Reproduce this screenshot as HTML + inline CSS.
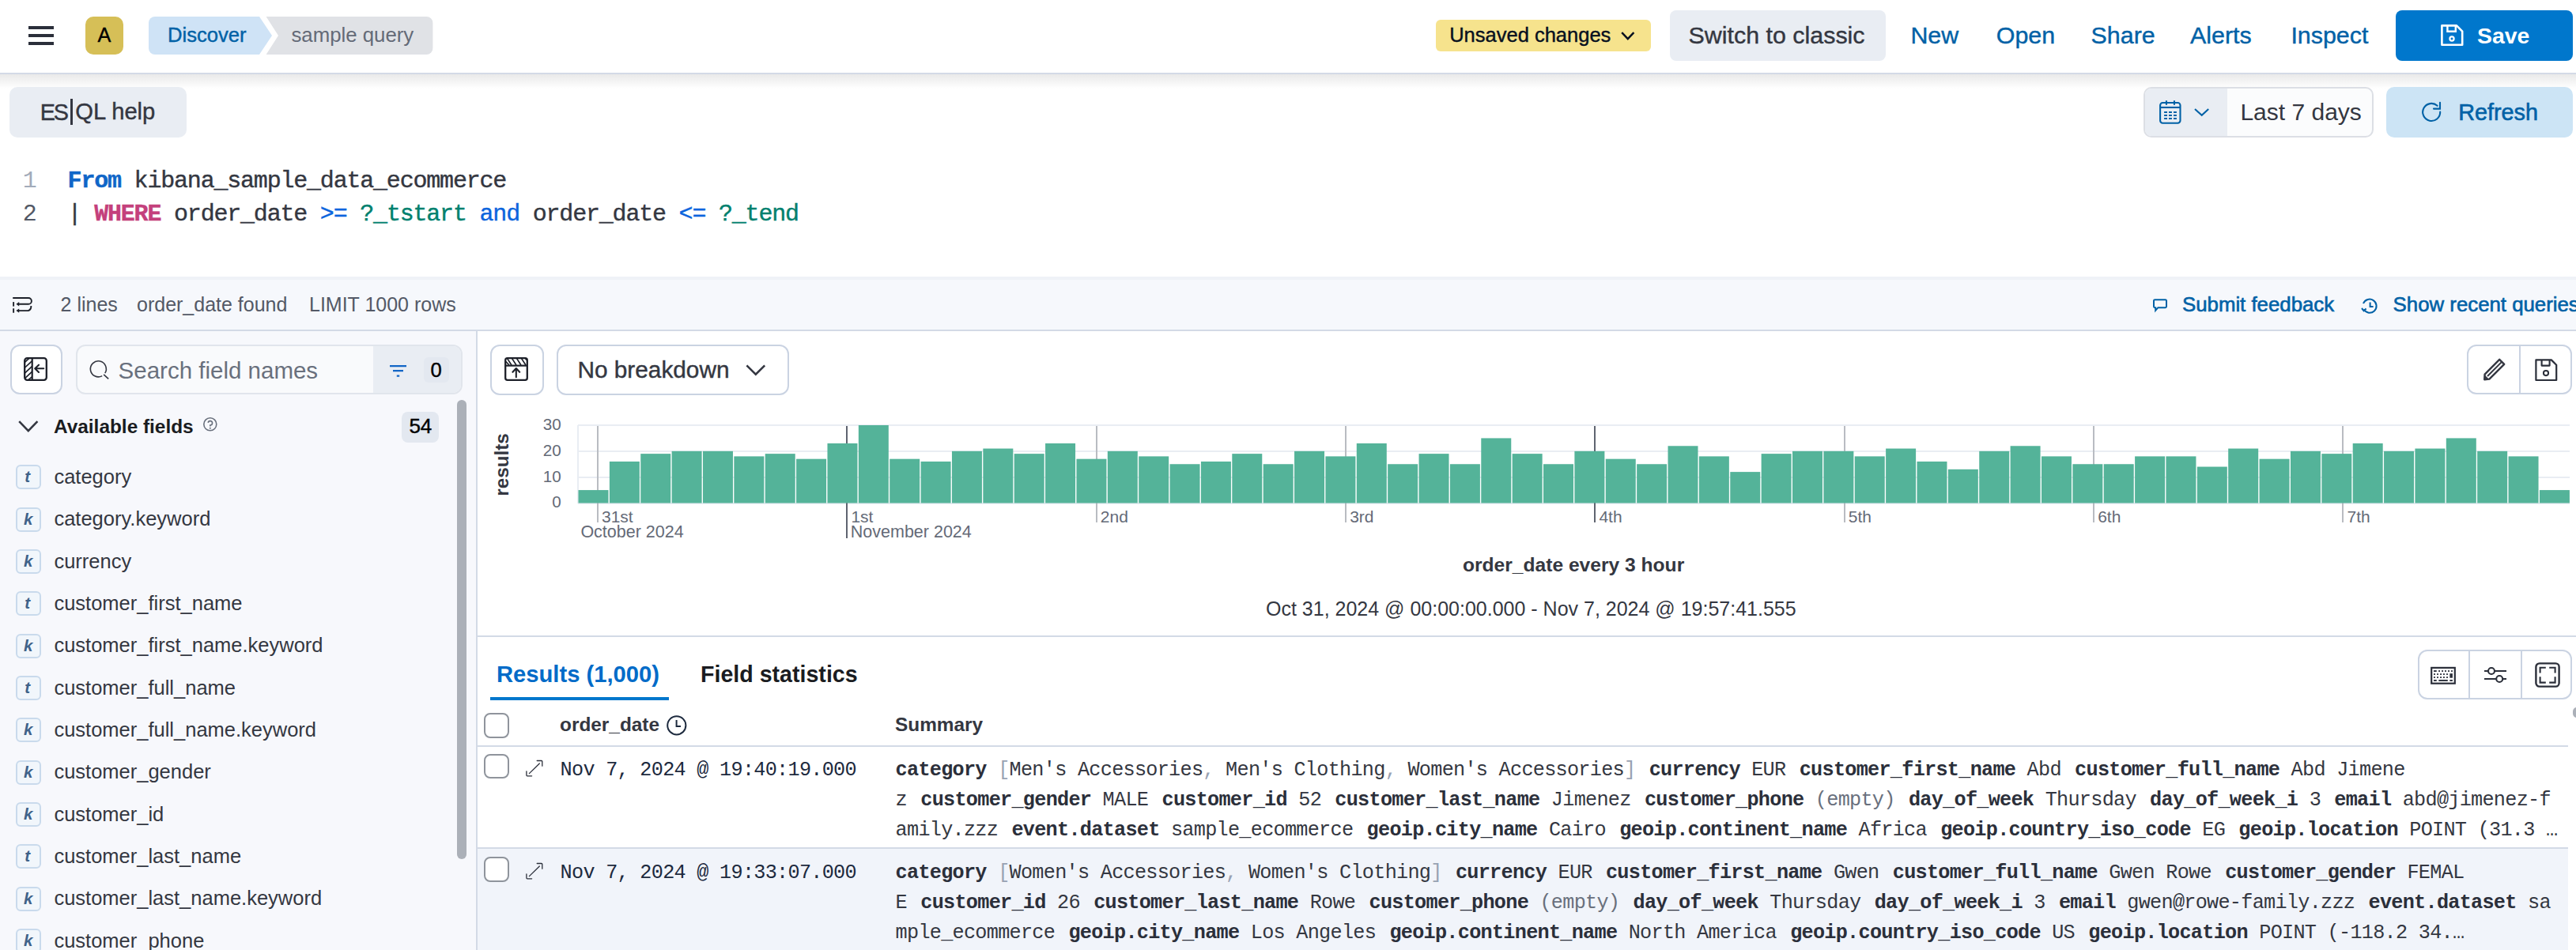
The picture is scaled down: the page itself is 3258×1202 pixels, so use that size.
<!DOCTYPE html>
<html><head><meta charset="utf-8"><title>Discover</title>
<style>
html,body{margin:0;padding:0;background:#fff;}
html{overflow:hidden;}
body{zoom:1;width:1629px;height:601px;overflow:hidden;position:relative;font-family:"Liberation Sans",sans-serif;}
@media (min-width:2400px){body{zoom:2;}}
.a{position:absolute;}
.t{white-space:pre;}
.s{font-family:"Liberation Sans",sans-serif;}
.m{font-family:"Liberation Mono",monospace;}
svg{overflow:visible;}
b{font-weight:700;}
.k{color:#2b2f3a;margin-left:1.45px;}
.md{-webkit-text-stroke:0.2px currentColor;}
</style></head><body>
<div class="a" style="left:0.00px;top:0.00px;width:1629.00px;height:46.00px;background:#fff;"></div>
<div class="a" style="left:0.00px;top:46.00px;width:1629.00px;height:1.00px;background:#d3dae6;"></div>
<div class="a" style="left:0.00px;top:47.00px;width:1629.00px;height:9.00px;background:linear-gradient(#e9e9e9,rgba(255,255,255,0));"></div>
<div class="a" style="left:18.00px;top:16.55px;width:16.00px;height:1.75px;background:#2b2f3a;"></div>
<div class="a" style="left:18.00px;top:21.60px;width:16.00px;height:1.75px;background:#2b2f3a;"></div>
<div class="a" style="left:18.00px;top:26.70px;width:16.00px;height:1.75px;background:#2b2f3a;"></div>
<div class="a" style="left:54.00px;top:10.45px;width:24.00px;height:23.90px;background:#d6bf57;border-radius:5px;"></div>
<div class="a t s md" style="left:61.80px;top:16.03px;font-size:12.6px;line-height:12.6px;color:#000;">A</div>
<svg class="a" style="left:94.00px;top:10.45px;" width="180" height="24" viewBox="0 0 180 24"><path d="M4 0 H70 L78 12 L70 24 H4 A4 4 0 0 1 0 20 V4 A4 4 0 0 1 4 0Z" fill="#cfe3f6"/><path d="M74.3 0 H175.7 A4 4 0 0 1 179.7 4 V20 A4 4 0 0 1 175.7 24 H74.3 L82 12 Z" fill="#e0e2e6"/></svg>
<div class="a t s md" style="left:106.00px;top:15.86px;font-size:12.8px;line-height:12.8px;color:#0061a6;">Discover</div>
<div class="a t s" style="left:184.20px;top:15.78px;font-size:12.9px;line-height:12.9px;color:#646a77;">sample query</div>
<div class="a" style="left:907.90px;top:12.60px;width:136.10px;height:20.00px;background:#f6e38d;border-radius:3px;"></div>
<div class="a t s md" style="left:916.60px;top:15.76px;font-size:12.75px;line-height:12.75px;color:#07101f;">Unsaved changes</div>
<svg class="a" style="left:1024.90px;top:19.90px;" width="9" height="6" viewBox="0 0 9 6"><path d="M0.6 0.6 L4.4 4.6 L8.2 0.6" fill="none" stroke="#07101f" stroke-width="1.2"/></svg>
<div class="a" style="left:1056.00px;top:6.40px;width:136.60px;height:32.00px;background:#e9edf3;border-radius:4px;"></div>
<div class="a t s md" style="left:1067.80px;top:14.49px;font-size:15.2px;line-height:15.2px;color:#343741;">Switch to classic</div>
<div class="a t s md" style="left:1208.20px;top:14.73px;font-size:15.2px;line-height:15.2px;color:#0061a6;">New</div>
<div class="a t s md" style="left:1262.40px;top:14.73px;font-size:15.2px;line-height:15.2px;color:#0061a6;">Open</div>
<div class="a t s md" style="left:1322.30px;top:14.73px;font-size:15.2px;line-height:15.2px;color:#0061a6;">Share</div>
<div class="a t s md" style="left:1385.00px;top:14.73px;font-size:15.2px;line-height:15.2px;color:#0061a6;">Alerts</div>
<div class="a t s md" style="left:1448.70px;top:14.73px;font-size:15.2px;line-height:15.2px;color:#0061a6;">Inspect</div>
<div class="a" style="left:1515.00px;top:6.50px;width:112.10px;height:31.80px;background:#0077cc;border-radius:4px;"></div>
<svg class="a" style="left:1543.30px;top:15.70px;" width="14.3" height="13.6" viewBox="0 0 14.3 13.6"><path d="M0.7 0.7 H10 L13.6 4.3 V12.9 H0.7 Z" fill="none" stroke="#fff" stroke-width="1.3" stroke-linejoin="round"/><path d="M4.2 0.7 V4.4 H9.4 V0.7" fill="none" stroke="#fff" stroke-width="1.2"/><circle cx="7" cy="9" r="1.3" fill="none" stroke="#fff" stroke-width="1.1"/></svg>
<div class="a t s" style="left:1566.50px;top:15.58px;font-size:14.2px;line-height:14.2px;color:#fff;font-weight:700;">Save</div>
<div class="a" style="left:6.00px;top:55.00px;width:112.00px;height:32.00px;background:#e9edf3;border-radius:5px;"></div>
<div class="a t s md" style="left:25.40px;top:63.91px;font-size:14.4px;line-height:14.4px;color:#343741;letter-spacing:-1.1px;">ES</div>
<div class="a" style="left:44.40px;top:62.30px;width:1.50px;height:16.90px;background:#343741;"></div>
<div class="a t s md" style="left:47.60px;top:63.74px;font-size:14.6px;line-height:14.6px;color:#343741;">QL help</div>
<div class="a" style="left:1355.60px;top:55.10px;width:145.20px;height:31.70px;background:#fbfcfd;border:1px solid #dcdfe5;border-radius:5px;box-sizing:border-box;"></div>
<div class="a" style="left:1356.60px;top:56.10px;width:51.70px;height:29.70px;background:#e9edf3;border-radius:4px 0 0 4px;"></div>
<svg class="a" style="left:1365.50px;top:63.50px;" width="14" height="15" viewBox="0 0 14 15"><rect x="0.55" y="1.5" width="12.7" height="12.9" rx="1.6" fill="none" stroke="#0061a6" stroke-width="1.05"/><path d="M0.6 4.47 H13.3" stroke="#0061a6" stroke-width="1.05"/><path d="M4.47 0.1 V2.9 M9.47 0.1 V2.9" stroke="#0061a6" stroke-width="1.05"/><rect x="3.05" y="7.0" width="1.95" height="1.0" fill="#0061a6"/><rect x="3.05" y="9.0" width="1.95" height="1.0" fill="#0061a6"/><rect x="3.05" y="11.0" width="1.95" height="1.0" fill="#0061a6"/><rect x="6.0" y="7.0" width="1.95" height="1.0" fill="#0061a6"/><rect x="6.0" y="9.0" width="1.95" height="1.0" fill="#0061a6"/><rect x="6.0" y="11.0" width="1.95" height="1.0" fill="#0061a6"/><rect x="9.0" y="7.0" width="1.95" height="1.0" fill="#0061a6"/><rect x="9.0" y="9.0" width="1.95" height="1.0" fill="#0061a6"/><rect x="9.0" y="11.0" width="1.95" height="1.0" fill="#0061a6"/></svg>
<svg class="a" style="left:1387.70px;top:68.40px;" width="10" height="6" viewBox="0 0 10 6"><path d="M0.5 0.5 L4.85 4.4 L9.1 0.5" fill="none" stroke="#0061a6" stroke-width="1.05"/></svg>
<div class="a t s" style="left:1416.70px;top:63.30px;font-size:15px;line-height:15px;color:#343741;">Last 7 days</div>
<div class="a" style="left:1509.00px;top:55.00px;width:117.80px;height:31.80px;background:#cce4f5;border-radius:5px;"></div>
<svg class="a" style="left:1532.00px;top:64.70px;" width="12" height="12.5" viewBox="0 0 12 12.5"><path d="M9.3 2.4 A5.5 5.5 0 1 0 11.1 6.3" fill="none" stroke="#0061a6" stroke-width="1.05" stroke-linecap="round"/><path d="M11.0 0.4 V4.3 H7.0" fill="none" stroke="#0061a6" stroke-width="1.05" stroke-linecap="round"/></svg>
<div class="a t s" style="left:1554.60px;top:63.81px;font-size:14.4px;line-height:14.4px;color:#0061a6;-webkit-text-stroke:0.3px currentColor;">Refresh</div>
<div class="a t m" style="left:14.40px;top:106.91px;font-size:15px;line-height:15px;color:#a2abba;letter-spacing:-0.6px;">1</div>
<div class="a t m" style="left:14.40px;top:127.91px;font-size:15px;line-height:15px;color:#535966;letter-spacing:-0.6px;">2</div>
<div class="a t m md" style="left:42.80px;top:106.91px;font-size:15px;line-height:15px;color:#343741;letter-spacing:-0.6px;"><span style="color:#0f66c8;font-weight:700">From</span> kibana_sample_data_ecommerce</div>
<div class="a t m md" style="left:42.80px;top:127.91px;font-size:15px;line-height:15px;color:#343741;letter-spacing:-0.6px;">| <span style="color:#c4407c;font-weight:700">WHERE</span> order_date <span style="color:#0b64dd">&gt;=</span> <span style="color:#00806e">?_tstart</span> <span style="color:#0b64dd">and</span> order_date <span style="color:#0b64dd">&lt;=</span> <span style="color:#00806e">?_tend</span></div>
<div class="a" style="left:0.00px;top:175.00px;width:1629.00px;height:33.50px;background:#f6f8fc;"></div>
<div class="a" style="left:0.00px;top:175.00px;width:1629.00px;height:2.00px;background:#eff2f7;"></div>
<div class="a" style="left:0.00px;top:208.30px;width:1629.00px;height:1.50px;background:#d3dae6;"></div>
<svg class="a" style="left:7.90px;top:188.00px;" width="12.5" height="10.5" viewBox="0 0 12.5 10.5"><path d="M0.1 0.5 H10 A1.95 1.95 0 0 1 10 4.4 H3.7 M11.65 5.5 A2.9 2.9 0 0 1 9.9 8.55 H3.7" fill="none" stroke="#1d2029" stroke-width="0.95"/><path d="M2.2 4.4 L4.1 3.05 V5.75Z M2.2 8.55 L4.1 7.2 V9.9Z" fill="#1d2029"/><rect x="0.08" y="3.05" width="0.95" height="2.75" fill="#1d2029"/><rect x="0.08" y="7.12" width="0.95" height="2.75" fill="#1d2029"/></svg>
<div class="a t s" style="left:38.30px;top:186.32px;font-size:12.5px;line-height:12.5px;color:#535966;">2 lines</div>
<div class="a t s" style="left:86.50px;top:186.32px;font-size:12.5px;line-height:12.5px;color:#535966;">order_date found</div>
<div class="a t s" style="left:195.50px;top:186.32px;font-size:12.5px;line-height:12.5px;color:#535966;">LIMIT 1000 rows</div>
<svg class="a" style="left:1361.50px;top:188.90px;" width="9" height="8" viewBox="0 0 9 8"><path d="M1.2 0.6 H7.8 A0.7 0.7 0 0 1 8.5 1.3 V4.9 A0.7 0.7 0 0 1 7.8 5.6 H3.2 L1.6 7.4 V5.6 H1.2 A0.7 0.7 0 0 1 0.5 4.9 V1.3 A0.7 0.7 0 0 1 1.2 0.6Z" fill="none" stroke="#0061a6" stroke-width="1"/></svg>
<div class="a t s" style="left:1380.00px;top:186.58px;font-size:12.9px;line-height:12.9px;color:#0061a6;-webkit-text-stroke:0.3px currentColor;">Submit feedback</div>
<svg class="a" style="left:1493.70px;top:188.80px;" width="10" height="9.5" viewBox="0 0 10 9.5"><path d="M1.3 6.8 A4.3 4.3 0 1 0 1 3" fill="none" stroke="#0061a6" stroke-width="1"/><path d="M5.3 2.3 V5 H7.3" fill="none" stroke="#0061a6" stroke-width="1"/><path d="M0 6 L1.3 7.6 L2.8 6.2" fill="none" stroke="#0061a6" stroke-width="1"/></svg>
<div class="a t s" style="left:1513.30px;top:186.58px;font-size:12.9px;line-height:12.9px;color:#0061a6;-webkit-text-stroke:0.3px currentColor;">Show recent queries</div>
<div class="a" style="left:0.00px;top:209.50px;width:301.00px;height:391.50px;background:#f7f8fc;"></div>
<div class="a" style="left:301.00px;top:209.50px;width:1.00px;height:391.50px;background:#d3dae6;"></div>
<div class="a" style="left:6.30px;top:218.20px;width:33.30px;height:31.40px;background:#fff;border:1px solid #cad3e2;border-radius:6px;box-sizing:border-box;"></div>
<svg class="a" style="left:15.10px;top:225.90px;" width="15" height="15" viewBox="0 0 15 15"><rect x="0.6" y="0.6" width="13.8" height="13.8" rx="1.6" fill="none" stroke="#1d2029" stroke-width="1.15"/><path d="M5.35 0.6 V14.4" stroke="#1d2029" stroke-width="1.1"/><path d="M0.8 3.1 L3.4 0.7 M0.8 6.5 L5.2 2.4 M0.8 9.9 L5.2 5.8 M0.8 13.3 L5.2 9.2 M2.9 14.3 L5.2 12.4" stroke="#1d2029" stroke-width="0.85"/><path d="M12.6 7.15 H7.2 M9.5 4.85 L7.1 7.15 L9.5 9.45" fill="none" stroke="#1d2029" stroke-width="1.05" stroke-linecap="round" stroke-linejoin="round"/></svg>
<div class="a" style="left:48.00px;top:218.20px;width:244.70px;height:31.40px;background:#f9fafc;border:1px solid #e1e5ec;border-radius:6px;box-sizing:border-box;"></div>
<div class="a" style="left:235.90px;top:219.20px;width:55.80px;height:29.40px;background:#e9edf3;border-radius:0 5px 5px 0;"></div>
<svg class="a" style="left:57.00px;top:227.50px;" width="12" height="12.6" viewBox="0 0 12 12.6"><path d="M9.4 8.6 A5 5 0 1 0 7.6 10.3" fill="none" stroke="#343741" stroke-width="0.8"/><path d="M8.6 9.4 L11.6 12.2" stroke="#343741" stroke-width="0.8"/></svg>
<div class="a t s" style="left:74.80px;top:227.01px;font-size:14.75px;line-height:14.75px;color:#69707d;">Search field names</div>
<svg class="a" style="left:246.70px;top:230.90px;" width="10.5" height="8" viewBox="0 0 10.5 8"><path d="M0 0.6 H10.5 M2 3.6 H8.5 M4.4 6.8 H6.1" stroke="#1366c6" stroke-width="1.1"/></svg>
<div class="a" style="left:268.00px;top:226.00px;width:15.80px;height:16.00px;background:#e3e8f0;border-radius:3px;"></div>
<div class="a t s md" style="left:272.20px;top:228.16px;font-size:12.8px;line-height:12.8px;color:#000;">0</div>
<svg class="a" style="left:11.40px;top:266.00px;" width="13" height="8" viewBox="0 0 13 8"><path d="M0.6 0.6 L6.4 6.6 L12.2 0.6" fill="none" stroke="#343741" stroke-width="1.3"/></svg>
<div class="a t s" style="left:34.00px;top:263.87px;font-size:12.2px;line-height:12.2px;color:#1a1c21;font-weight:700;">Available fields</div>
<svg class="a" style="left:128.50px;top:263.80px;" width="9" height="9" viewBox="0 0 9 9"><circle cx="4.4" cy="4.4" r="4" fill="none" stroke="#69707d" stroke-width="0.8"/><path d="M3.1 3.4 A1.35 1.35 0 1 1 4.4 5 V5.8" fill="none" stroke="#69707d" stroke-width="0.8"/><circle cx="4.4" cy="6.9" r="0.5" fill="#69707d"/></svg>
<div class="a" style="left:253.90px;top:260.30px;width:23.80px;height:19.50px;background:#e3e8f0;border-radius:4px;"></div>
<div class="a t s md" style="left:258.70px;top:263.20px;font-size:13px;line-height:13px;color:#000;">54</div>
<div class="a" style="left:289.00px;top:253.00px;width:6.00px;height:290.40px;background:#abb0b8;border-radius:3px;"></div>
<div class="a" style="left:10.10px;top:294.10px;width:15.70px;height:15.60px;background:#f1f6fb;border:1px solid #c9daec;border-radius:3px;box-sizing:border-box;"></div>
<div class="a t s" style="left:15.60px;top:296.68px;font-size:10.3px;line-height:10.3px;color:#3f6289;font-weight:700;font-style:italic;">t</div>
<div class="a t s" style="left:34.20px;top:295.41px;font-size:12.75px;line-height:12.75px;color:#343741;">category</div>
<div class="a" style="left:10.10px;top:320.77px;width:15.70px;height:15.60px;background:#f1f6fb;border:1px solid #c9daec;border-radius:3px;box-sizing:border-box;"></div>
<div class="a t s" style="left:15.00px;top:323.35px;font-size:10.3px;line-height:10.3px;color:#3f6289;font-weight:700;font-style:italic;">k</div>
<div class="a t s" style="left:34.20px;top:322.08px;font-size:12.75px;line-height:12.75px;color:#343741;">category.keyword</div>
<div class="a" style="left:10.10px;top:347.44px;width:15.70px;height:15.60px;background:#f1f6fb;border:1px solid #c9daec;border-radius:3px;box-sizing:border-box;"></div>
<div class="a t s" style="left:15.00px;top:350.02px;font-size:10.3px;line-height:10.3px;color:#3f6289;font-weight:700;font-style:italic;">k</div>
<div class="a t s" style="left:34.20px;top:348.75px;font-size:12.75px;line-height:12.75px;color:#343741;">currency</div>
<div class="a" style="left:10.10px;top:374.11px;width:15.70px;height:15.60px;background:#f1f6fb;border:1px solid #c9daec;border-radius:3px;box-sizing:border-box;"></div>
<div class="a t s" style="left:15.60px;top:376.69px;font-size:10.3px;line-height:10.3px;color:#3f6289;font-weight:700;font-style:italic;">t</div>
<div class="a t s" style="left:34.20px;top:375.42px;font-size:12.75px;line-height:12.75px;color:#343741;">customer_first_name</div>
<div class="a" style="left:10.10px;top:400.78px;width:15.70px;height:15.60px;background:#f1f6fb;border:1px solid #c9daec;border-radius:3px;box-sizing:border-box;"></div>
<div class="a t s" style="left:15.00px;top:403.36px;font-size:10.3px;line-height:10.3px;color:#3f6289;font-weight:700;font-style:italic;">k</div>
<div class="a t s" style="left:34.20px;top:402.09px;font-size:12.75px;line-height:12.75px;color:#343741;">customer_first_name.keyword</div>
<div class="a" style="left:10.10px;top:427.45px;width:15.70px;height:15.60px;background:#f1f6fb;border:1px solid #c9daec;border-radius:3px;box-sizing:border-box;"></div>
<div class="a t s" style="left:15.60px;top:430.03px;font-size:10.3px;line-height:10.3px;color:#3f6289;font-weight:700;font-style:italic;">t</div>
<div class="a t s" style="left:34.20px;top:428.76px;font-size:12.75px;line-height:12.75px;color:#343741;">customer_full_name</div>
<div class="a" style="left:10.10px;top:454.12px;width:15.70px;height:15.60px;background:#f1f6fb;border:1px solid #c9daec;border-radius:3px;box-sizing:border-box;"></div>
<div class="a t s" style="left:15.00px;top:456.70px;font-size:10.3px;line-height:10.3px;color:#3f6289;font-weight:700;font-style:italic;">k</div>
<div class="a t s" style="left:34.20px;top:455.43px;font-size:12.75px;line-height:12.75px;color:#343741;">customer_full_name.keyword</div>
<div class="a" style="left:10.10px;top:480.79px;width:15.70px;height:15.60px;background:#f1f6fb;border:1px solid #c9daec;border-radius:3px;box-sizing:border-box;"></div>
<div class="a t s" style="left:15.00px;top:483.37px;font-size:10.3px;line-height:10.3px;color:#3f6289;font-weight:700;font-style:italic;">k</div>
<div class="a t s" style="left:34.20px;top:482.10px;font-size:12.75px;line-height:12.75px;color:#343741;">customer_gender</div>
<div class="a" style="left:10.10px;top:507.46px;width:15.70px;height:15.60px;background:#f1f6fb;border:1px solid #c9daec;border-radius:3px;box-sizing:border-box;"></div>
<div class="a t s" style="left:15.00px;top:510.04px;font-size:10.3px;line-height:10.3px;color:#3f6289;font-weight:700;font-style:italic;">k</div>
<div class="a t s" style="left:34.20px;top:508.77px;font-size:12.75px;line-height:12.75px;color:#343741;">customer_id</div>
<div class="a" style="left:10.10px;top:534.13px;width:15.70px;height:15.60px;background:#f1f6fb;border:1px solid #c9daec;border-radius:3px;box-sizing:border-box;"></div>
<div class="a t s" style="left:15.60px;top:536.71px;font-size:10.3px;line-height:10.3px;color:#3f6289;font-weight:700;font-style:italic;">t</div>
<div class="a t s" style="left:34.20px;top:535.44px;font-size:12.75px;line-height:12.75px;color:#343741;">customer_last_name</div>
<div class="a" style="left:10.10px;top:560.80px;width:15.70px;height:15.60px;background:#f1f6fb;border:1px solid #c9daec;border-radius:3px;box-sizing:border-box;"></div>
<div class="a t s" style="left:15.00px;top:563.38px;font-size:10.3px;line-height:10.3px;color:#3f6289;font-weight:700;font-style:italic;">k</div>
<div class="a t s" style="left:34.20px;top:562.11px;font-size:12.75px;line-height:12.75px;color:#343741;">customer_last_name.keyword</div>
<div class="a" style="left:10.10px;top:587.47px;width:15.70px;height:15.60px;background:#f1f6fb;border:1px solid #c9daec;border-radius:3px;box-sizing:border-box;"></div>
<div class="a t s" style="left:15.00px;top:590.05px;font-size:10.3px;line-height:10.3px;color:#3f6289;font-weight:700;font-style:italic;">k</div>
<div class="a t s" style="left:34.20px;top:588.78px;font-size:12.75px;line-height:12.75px;color:#343741;">customer_phone</div>
<div class="a" style="left:302.00px;top:209.50px;width:1327.00px;height:391.50px;background:#fff;"></div>
<div class="a" style="left:310.00px;top:218.10px;width:33.80px;height:31.70px;background:#fff;border:1px solid #cad3e2;border-radius:6px;box-sizing:border-box;"></div>
<svg class="a" style="left:319.00px;top:226.10px;" width="15" height="15" viewBox="0 0 15 15"><rect x="0.6" y="0.6" width="13.8" height="13.8" rx="1.3" fill="none" stroke="#1d2029" stroke-width="1.15"/><path d="M0.6 5.3 H14.4" stroke="#1d2029" stroke-width="1.1"/><path d="M0.8 2.6 L3.0 5.0 M1.8 0.8 L4.5 5.0 M4.8 0.8 L7.5 5.0 M7.8 0.8 L10.5 5.0 M10.8 0.8 L13.5 5.0 M13.2 0.8 L14.2 1.9" stroke="#1d2029" stroke-width="0.85"/><path d="M7.4 12.6 V7.1 M5.2 9.4 L7.4 7.0 L9.6 9.4" fill="none" stroke="#1d2029" stroke-width="1.05" stroke-linecap="round" stroke-linejoin="round"/></svg>
<div class="a" style="left:352.00px;top:218.10px;width:146.80px;height:31.70px;background:#fff;border:1px solid #cad3e2;border-radius:6px;box-sizing:border-box;"></div>
<div class="a t s md" style="left:365.20px;top:226.39px;font-size:14.9px;line-height:14.9px;color:#343741;">No breakdown</div>
<svg class="a" style="left:471.50px;top:230.50px;" width="13" height="7" viewBox="0 0 13 7"><path d="M0.7 0.7 L6.4 6.3 L12.1 0.7" fill="none" stroke="#343741" stroke-width="1.3"/></svg>
<div class="a" style="left:1560.00px;top:218.00px;width:66.70px;height:31.50px;background:#fff;border:1px solid #cad3e2;border-radius:6px;box-sizing:border-box;"></div>
<div class="a" style="left:1593.00px;top:218.50px;width:1.00px;height:30.50px;background:#cad3e2;"></div>
<svg class="a" style="left:1569.90px;top:226.50px;" width="14.5" height="14.5" viewBox="0 0 14.5 14.5"><path d="M10.6 0.9 L13.6 3.9 L4.2 13.3 L1.1 13.6 L1.3 10.3 Z" fill="none" stroke="#343741" stroke-width="1.2" stroke-linejoin="round"/><path d="M1.2 10.6 L4 13.4 L1 13.6Z" fill="#343741"/><path d="M3 11.5 L11.8 2.7" stroke="#343741" stroke-width="1"/></svg>
<svg class="a" style="left:1603.00px;top:226.80px;" width="14.5" height="14.5" viewBox="0 0 14.5 14.5"><path d="M0.7 0.7 H10.4 L13.6 3.9 V13.5 H0.7 Z" fill="none" stroke="#2b2f3a" stroke-width="1.1" stroke-linejoin="round"/><path d="M4.3 0.7 V4.3 H9.3 V0.7" fill="none" stroke="#2b2f3a" stroke-width="1.05" stroke-linejoin="round"/><circle cx="7.0" cy="9.05" r="1.55" fill="none" stroke="#2b2f3a" stroke-width="1.0"/></svg>
<div class="a" style="left:365.30px;top:317.75px;width:1259.90px;height:1.00px;background:#e9edf3;"></div>
<div class="a" style="left:365.30px;top:301.33px;width:1259.90px;height:1.00px;background:#e9edf3;"></div>
<div class="a" style="left:365.30px;top:284.92px;width:1259.90px;height:1.00px;background:#e9edf3;"></div>
<div class="a" style="left:365.30px;top:268.50px;width:1259.90px;height:1.00px;background:#e9edf3;"></div>
<div class="a" style="left:364.80px;top:269.00px;width:1.00px;height:49.25px;background:#e9edf3;"></div>
<div class="a" style="left:377.40px;top:269.50px;width:1.00px;height:60.80px;background:#b9bcc2;"></div>
<div class="a t s" style="left:380.50px;top:321.31px;font-size:10.5px;line-height:10.5px;color:#646a77;">31st</div>
<div class="a" style="left:535.10px;top:269.50px;width:1.00px;height:70.80px;background:#5f6470;"></div>
<div class="a t s" style="left:538.20px;top:321.31px;font-size:10.5px;line-height:10.5px;color:#646a77;">1st</div>
<div class="a" style="left:692.80px;top:269.50px;width:1.00px;height:60.80px;background:#b9bcc2;"></div>
<div class="a t s" style="left:695.90px;top:321.31px;font-size:10.5px;line-height:10.5px;color:#646a77;">2nd</div>
<div class="a" style="left:850.50px;top:269.50px;width:1.00px;height:60.80px;background:#b9bcc2;"></div>
<div class="a t s" style="left:853.60px;top:321.31px;font-size:10.5px;line-height:10.5px;color:#646a77;">3rd</div>
<div class="a" style="left:1008.10px;top:269.50px;width:1.00px;height:60.80px;background:#5f6470;"></div>
<div class="a t s" style="left:1011.20px;top:321.31px;font-size:10.5px;line-height:10.5px;color:#646a77;">4th</div>
<div class="a" style="left:1165.80px;top:269.50px;width:1.00px;height:60.80px;background:#b9bcc2;"></div>
<div class="a t s" style="left:1168.90px;top:321.31px;font-size:10.5px;line-height:10.5px;color:#646a77;">5th</div>
<div class="a" style="left:1323.50px;top:269.50px;width:1.00px;height:60.80px;background:#b9bcc2;"></div>
<div class="a t s" style="left:1326.60px;top:321.31px;font-size:10.5px;line-height:10.5px;color:#646a77;">6th</div>
<div class="a" style="left:1481.20px;top:269.50px;width:1.00px;height:60.80px;background:#b9bcc2;"></div>
<div class="a t s" style="left:1484.30px;top:321.31px;font-size:10.5px;line-height:10.5px;color:#646a77;">7th</div>
<div class="a t s" style="left:367.20px;top:331.30px;font-size:10.75px;line-height:10.75px;color:#646a77;">October 2024</div>
<div class="a t s" style="left:537.90px;top:331.30px;font-size:10.75px;line-height:10.75px;color:#646a77;">November 2024</div>
<svg class="a" style="left:365.30px;top:269.00px;" width="1259.9" height="49.25" viewBox="0 0 1259.9 49.25"><g fill="#54b399"><rect x="0.25" y="41.04" width="18.99" height="8.21"/><rect x="19.94" y="22.98" width="18.99" height="26.27"/><rect x="39.62" y="18.06" width="18.99" height="31.19"/><rect x="59.31" y="16.42" width="18.99" height="32.83"/><rect x="78.99" y="16.42" width="18.99" height="32.83"/><rect x="98.68" y="19.70" width="18.99" height="29.55"/><rect x="118.37" y="18.06" width="18.99" height="31.19"/><rect x="138.05" y="21.34" width="18.99" height="27.91"/><rect x="157.74" y="11.49" width="18.99" height="37.76"/><rect x="177.42" y="0.00" width="18.99" height="49.25"/><rect x="197.11" y="21.34" width="18.99" height="27.91"/><rect x="216.80" y="22.98" width="18.99" height="26.27"/><rect x="236.48" y="16.42" width="18.99" height="32.83"/><rect x="256.17" y="14.77" width="18.99" height="34.48"/><rect x="275.85" y="18.06" width="18.99" height="31.19"/><rect x="295.54" y="11.49" width="18.99" height="37.76"/><rect x="315.23" y="21.34" width="18.99" height="27.91"/><rect x="334.91" y="16.42" width="18.99" height="32.83"/><rect x="354.60" y="19.70" width="18.99" height="29.55"/><rect x="374.28" y="24.62" width="18.99" height="24.62"/><rect x="393.97" y="22.98" width="18.99" height="26.27"/><rect x="413.65" y="18.06" width="18.99" height="31.19"/><rect x="433.34" y="24.62" width="18.99" height="24.62"/><rect x="453.03" y="16.42" width="18.99" height="32.83"/><rect x="472.71" y="19.70" width="18.99" height="29.55"/><rect x="492.40" y="11.49" width="18.99" height="37.76"/><rect x="512.08" y="24.62" width="18.99" height="24.62"/><rect x="531.77" y="18.06" width="18.99" height="31.19"/><rect x="551.46" y="24.62" width="18.99" height="24.62"/><rect x="571.14" y="8.21" width="18.99" height="41.04"/><rect x="590.83" y="18.06" width="18.99" height="31.19"/><rect x="610.51" y="24.62" width="18.99" height="24.62"/><rect x="630.20" y="16.42" width="18.99" height="32.83"/><rect x="649.89" y="21.34" width="18.99" height="27.91"/><rect x="669.57" y="24.62" width="18.99" height="24.62"/><rect x="689.26" y="13.13" width="18.99" height="36.12"/><rect x="708.94" y="19.70" width="18.99" height="29.55"/><rect x="728.63" y="29.55" width="18.99" height="19.70"/><rect x="748.32" y="18.06" width="18.99" height="31.19"/><rect x="768.00" y="16.42" width="18.99" height="32.83"/><rect x="787.69" y="16.42" width="18.99" height="32.83"/><rect x="807.37" y="19.70" width="18.99" height="29.55"/><rect x="827.06" y="14.77" width="18.99" height="34.48"/><rect x="846.75" y="22.98" width="18.99" height="26.27"/><rect x="866.43" y="27.91" width="18.99" height="21.34"/><rect x="886.12" y="16.42" width="18.99" height="32.83"/><rect x="905.80" y="13.13" width="18.99" height="36.12"/><rect x="925.49" y="19.70" width="18.99" height="29.55"/><rect x="945.18" y="24.62" width="18.99" height="24.62"/><rect x="964.86" y="24.62" width="18.99" height="24.62"/><rect x="984.55" y="19.70" width="18.99" height="29.55"/><rect x="1004.23" y="19.70" width="18.99" height="29.55"/><rect x="1023.92" y="26.27" width="18.99" height="22.98"/><rect x="1043.60" y="14.77" width="18.99" height="34.48"/><rect x="1063.29" y="21.34" width="18.99" height="27.91"/><rect x="1082.98" y="16.42" width="18.99" height="32.83"/><rect x="1102.66" y="18.06" width="18.99" height="31.19"/><rect x="1122.35" y="11.49" width="18.99" height="37.76"/><rect x="1142.03" y="16.42" width="18.99" height="32.83"/><rect x="1161.72" y="14.77" width="18.99" height="34.48"/><rect x="1181.41" y="8.21" width="18.99" height="41.04"/><rect x="1201.09" y="16.42" width="18.99" height="32.83"/><rect x="1220.78" y="19.70" width="18.99" height="29.55"/><rect x="1240.46" y="41.04" width="18.99" height="8.21"/></g></svg>
<div class="a t s" style="left:300px;width:54.8px;text-align:right;top:263.58px;font-size:10.3px;line-height:10.3px;color:#646a77">30</div>
<div class="a t s" style="left:300px;width:54.8px;text-align:right;top:280.18px;font-size:10.3px;line-height:10.3px;color:#646a77">20</div>
<div class="a t s" style="left:300px;width:54.8px;text-align:right;top:296.28px;font-size:10.3px;line-height:10.3px;color:#646a77">10</div>
<div class="a t s" style="left:300px;width:54.8px;text-align:right;top:312.58px;font-size:10.3px;line-height:10.3px;color:#646a77">0</div>
<div class="a s" style="left:297.6px;top:287.8px;width:40px;height:12px;font-size:12.1px;line-height:12px;font-weight:700;color:#343741;transform:rotate(-90deg);text-align:center">results</div>
<div class="a t s" style="left:925.00px;top:351.29px;font-size:12.3px;line-height:12.3px;color:#343741;font-weight:700;">order_date every 3 hour</div>
<div class="a t s" style="left:800.50px;top:379.22px;font-size:12.5px;line-height:12.5px;color:#343741;">Oct 31, 2024 @ 00:00:00.000 - Nov 7, 2024 @ 19:57:41.555</div>
<div class="a" style="left:302.00px;top:402.00px;width:1327.00px;height:1.00px;background:#d3dae6;"></div>
<div class="a t s" style="left:314.00px;top:419.44px;font-size:14.6px;line-height:14.6px;color:#006bc8;font-weight:700;">Results (1,000)</div>
<div class="a t s" style="left:443.00px;top:419.70px;font-size:14.3px;line-height:14.3px;color:#1a1c21;font-weight:700;">Field statistics</div>
<div class="a" style="left:310.00px;top:441.00px;width:112.90px;height:2.00px;background:#0077cc;"></div>
<div class="a" style="left:1529.00px;top:411.00px;width:97.70px;height:31.50px;background:#fff;border:1px solid #cad3e2;border-radius:6px;box-sizing:border-box;"></div>
<div class="a" style="left:1561.00px;top:411.50px;width:1.00px;height:30.50px;background:#cad3e2;"></div>
<div class="a" style="left:1594.00px;top:411.50px;width:1.00px;height:30.50px;background:#cad3e2;"></div>
<svg class="a" style="left:1537.00px;top:421.50px;" width="16" height="12" viewBox="0 0 16 12"><rect x="0.6" y="0.95" width="14.8" height="9.9" fill="none" stroke="#2b2f3a" stroke-width="1.1"/><rect x="2.03" y="2.55" width="1.84" height="0.95" fill="#2b2f3a"/><rect x="5.08" y="2.55" width="0.9" height="0.95" fill="#2b2f3a"/><rect x="7.11" y="2.55" width="0.9" height="0.95" fill="#2b2f3a"/><rect x="9.05" y="2.55" width="0.9" height="0.95" fill="#2b2f3a"/><rect x="11.05" y="2.55" width="0.9" height="0.95" fill="#2b2f3a"/><rect x="13.05" y="2.55" width="0.9" height="0.95" fill="#2b2f3a"/><rect x="2.05" y="4.55" width="0.9" height="0.95" fill="#2b2f3a"/><rect x="4.05" y="4.55" width="0.9" height="0.95" fill="#2b2f3a"/><rect x="6.08" y="4.55" width="0.9" height="0.95" fill="#2b2f3a"/><rect x="8.03" y="4.55" width="0.9" height="0.95" fill="#2b2f3a"/><rect x="10.05" y="4.55" width="0.9" height="0.95" fill="#2b2f3a"/><rect x="2.05" y="6.55" width="0.9" height="0.95" fill="#2b2f3a"/><rect x="4.05" y="6.55" width="0.9" height="0.95" fill="#2b2f3a"/><rect x="6.08" y="6.55" width="0.9" height="0.95" fill="#2b2f3a"/><rect x="8.03" y="6.55" width="0.9" height="0.95" fill="#2b2f3a"/><rect x="10.05" y="6.55" width="0.9" height="0.95" fill="#2b2f3a"/><rect x="12.18" y="4.57" width="1.77" height="2.78" fill="#2b2f3a"/><rect x="2.03" y="8.52" width="1.84" height="0.95" fill="#2b2f3a"/><rect x="5.17" y="8.52" width="5.73" height="0.95" fill="#2b2f3a"/><rect x="12.18" y="8.52" width="1.77" height="0.95" fill="#2b2f3a"/></svg>
<svg class="a" style="left:1571.00px;top:422.50px;" width="14" height="9" viewBox="0 0 14 9"><path d="M0 2.0 H14 M0 7.0 H14" stroke="#2b2f3a" stroke-width="1.05"/><circle cx="4.5" cy="2.0" r="2.0" fill="#fff" stroke="#2b2f3a" stroke-width="1.05"/><circle cx="9.6" cy="7.0" r="2.0" fill="#fff" stroke="#2b2f3a" stroke-width="1.05"/></svg>
<svg class="a" style="left:1603.00px;top:419.00px;" width="16" height="16" viewBox="0 0 16 16"><rect x="0.7" y="0.7" width="14.6" height="14.6" rx="2.2" fill="none" stroke="#2b2f3a" stroke-width="1.2"/><path d="M3.3 6.7 V3.4 H6.9 M9.1 3.4 H12.8 V6.7 M12.8 9.1 V12.8 H9.1 M6.9 12.8 H3.3 V9.1" fill="none" stroke="#2b2f3a" stroke-width="1.05"/></svg>
<div class="a" style="left:1627.00px;top:447.50px;width:5.00px;height:6.50px;background:#abb0b8;border-radius:2.5px;"></div>
<div class="a" style="left:306.10px;top:451.00px;width:15.80px;height:15.90px;background:#fff;border:1px solid #8f949c;border-radius:4px;box-sizing:border-box;"></div>
<div class="a t s" style="left:354.00px;top:452.67px;font-size:12.2px;line-height:12.2px;color:#343741;font-weight:700;">order_date</div>
<svg class="a" style="left:421.60px;top:452.60px;" width="12.8" height="12.8" viewBox="0 0 12.8 12.8"><circle cx="6.4" cy="6.4" r="5.8" fill="none" stroke="#1d2a3e" stroke-width="1"/><path d="M6.3 3 V7 H9" fill="none" stroke="#1d2a3e" stroke-width="1"/></svg>
<div class="a t s" style="left:566.00px;top:452.67px;font-size:12.2px;line-height:12.2px;color:#343741;font-weight:700;">Summary</div>
<div class="a" style="left:302.00px;top:471.50px;width:1322.00px;height:1.00px;background:#d3dae6;"></div>
<div class="a" style="left:306.10px;top:477.20px;width:15.80px;height:15.50px;background:#fff;border:1px solid #8f949c;border-radius:4px;box-sizing:border-box;"></div>
<svg class="a" style="left:332.50px;top:480.80px;" width="11" height="10.5" viewBox="0 0 11 10.5"><path d="M2.2 8.3 L8.65 2 M7.1 0.25 H9.9 Q10.4 0.25 10.4 0.75 V3.6 M0.45 6.9 V9.4 Q0.45 9.9 0.95 9.9 H3.8" fill="none" stroke="#2b2f3a" stroke-width="0.65" stroke-linecap="round"/></svg>
<div class="a t m" style="left:354.30px;top:480.85px;font-size:12.6px;line-height:12.6px;color:#1d2a3e;letter-spacing:-0.36px;">Nov 7, 2024 @ 19:40:19.000</div>
<div class="a t m" style="left:566.30px;top:481.05px;font-size:12.6px;line-height:12.6px;color:#343741;letter-spacing:-0.36px;"><b class="k" style=margin-left:0>category</b> <span style="color:#98a2b3">[</span>Men's Accessories<span style="color:#98a2b3">,</span> Men's Clothing<span style="color:#98a2b3">,</span> Women's Accessories<span style="color:#98a2b3">]</span> <b class="k">currency</b> EUR <b class="k">customer_first_name</b> Abd <b class="k">customer_full_name</b> Abd Jimene</div>
<div class="a t m" style="left:566.30px;top:500.05px;font-size:12.6px;line-height:12.6px;color:#343741;letter-spacing:-0.36px;">z <b class="k">customer_gender</b> MALE <b class="k">customer_id</b> 52 <b class="k">customer_last_name</b> Jimenez <b class="k">customer_phone</b> <span style="color:#69707d">(empty)</span> <b class="k">day_of_week</b> Thursday <b class="k">day_of_week_i</b> 3 <b class="k">email</b> abd@jimenez-f</div>
<div class="a t m" style="left:566.30px;top:519.05px;font-size:12.6px;line-height:12.6px;color:#343741;letter-spacing:-0.36px;">amily.zzz <b class="k">event.dataset</b> sample_ecommerce <b class="k">geoip.city_name</b> Cairo <b class="k">geoip.continent_name</b> Africa <b class="k">geoip.country_iso_code</b> EG <b class="k">geoip.location</b> POINT (31.3 …</div>
<div class="a" style="left:302.00px;top:536.20px;width:1322.00px;height:1.00px;background:#d3dae6;"></div>
<div class="a" style="left:302.00px;top:537.20px;width:1322.00px;height:63.80px;background:#f1f4fa;"></div>
<div class="a" style="left:306.10px;top:542.20px;width:15.80px;height:15.60px;background:#fff;border:1px solid #8f949c;border-radius:4px;box-sizing:border-box;"></div>
<svg class="a" style="left:332.50px;top:545.80px;" width="11" height="10.5" viewBox="0 0 11 10.5"><path d="M2.2 8.3 L8.65 2 M7.1 0.25 H9.9 Q10.4 0.25 10.4 0.75 V3.6 M0.45 6.9 V9.4 Q0.45 9.9 0.95 9.9 H3.8" fill="none" stroke="#2b2f3a" stroke-width="0.65" stroke-linecap="round"/></svg>
<div class="a t m" style="left:354.30px;top:545.85px;font-size:12.6px;line-height:12.6px;color:#1d2a3e;letter-spacing:-0.36px;">Nov 7, 2024 @ 19:33:07.000</div>
<div class="a t m" style="left:566.30px;top:545.75px;font-size:12.6px;line-height:12.6px;color:#343741;letter-spacing:-0.36px;"><b class="k" style=margin-left:0>category</b> <span style="color:#98a2b3">[</span>Women's Accessories<span style="color:#98a2b3">,</span> Women's Clothing<span style="color:#98a2b3">]</span> <b class="k">currency</b> EUR <b class="k">customer_first_name</b> Gwen <b class="k">customer_full_name</b> Gwen Rowe <b class="k">customer_gender</b> FEMAL</div>
<div class="a t m" style="left:566.30px;top:564.75px;font-size:12.6px;line-height:12.6px;color:#343741;letter-spacing:-0.36px;">E <b class="k">customer_id</b> 26 <b class="k">customer_last_name</b> Rowe <b class="k">customer_phone</b> <span style="color:#69707d">(empty)</span> <b class="k">day_of_week</b> Thursday <b class="k">day_of_week_i</b> 3 <b class="k">email</b> gwen@rowe-family.zzz <b class="k">event.dataset</b> sa</div>
<div class="a t m" style="left:566.30px;top:583.75px;font-size:12.6px;line-height:12.6px;color:#343741;letter-spacing:-0.36px;">mple_ecommerce <b class="k">geoip.city_name</b> Los Angeles <b class="k">geoip.continent_name</b> North America <b class="k">geoip.country_iso_code</b> US <b class="k">geoip.location</b> POINT (-118.2 34.…</div>
</body></html>
